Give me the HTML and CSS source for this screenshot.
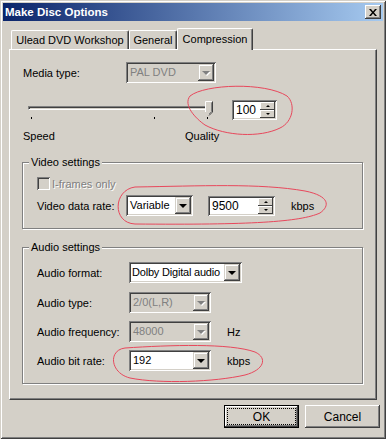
FILE: index.html
```html
<!DOCTYPE html>
<html lang="en">
<head>
    <meta charset="UTF-8">
    <meta name="viewport" content="width=device-width, initial-scale=1.0">
    <title>Make Disc Options</title>
    <link rel="stylesheet" href="styles.css">
</head>
<body>
    <div class="window">
        <div class="titlebar">
            <span class="title">Make Disc Options</span>
            <span class="close-btn">
                <svg width="8" height="7" viewBox="0 0 8 7"><path d="M0 0h2l2 2.4L6 0h2L5 3.5 8 7H6L4 4.6 2 7H0l3-3.5z" fill="#000"/></svg>
            </span>
        </div>

        <div class="tabs">
            <div class="tab tab-ulead">Ulead DVD Workshop</div>
            <div class="tab tab-general">General</div>
            <div class="tab tab-active">Compression</div>
        </div>

        <div class="panel">
            <div class="row">
                <span class="label label-media">Media type:</span>
                <div class="combo combo-media disabled">
                    <span class="combo-text">PAL DVD</span>
                    <span class="drop"><i class="arrow"></i></span>
                </div>
            </div>

            <div class="slider-row">
                <div class="slider">
                    <div class="track"></div>
                    <div class="ticks">
                        <span class="tick tick-min"></span>
                        <span class="tick tick-mid"></span>
                        <span class="tick tick-max"></span>
                    </div>
                    <svg class="thumb" width="8" height="15" viewBox="0 0 8 15">
                        <path d="M0.5 14V0.5H7.5V11L4 14.5z" fill="#d4d0c8"/>
                        <path d="M0.5 11V0.5H7" fill="none" stroke="#fff"/>
                        <path d="M7.5 0.5V11L4 14.5" fill="none" stroke="#404040"/>
                        <path d="M6.5 1.5V10.5L4 13" fill="none" stroke="#808080"/>
                    </svg>
                </div>
                <div class="spin spin-quality">
                    <span class="spin-text">100</span>
                    <span class="spin-btns">
                        <span class="spin-btn"><i class="mini-up"></i></span>
                        <span class="spin-btn"><i class="mini-down"></i></span>
                    </span>
                </div>
            </div>

            <div class="scale-labels">
                <span class="scale-speed">Speed</span>
                <span>Quality</span>
            </div>

            <div class="group group-video">
                <span class="group-label">Video settings</span>
                <div class="check-row">
                    <span class="checkbox"></span>
                    <span class="muted">I-frames only</span>
                </div>
                <div class="row row-rate">
                    <span class="label label-video">Video data rate:</span>
                    <div class="combo combo-rate">
                        <span class="combo-text">Variable</span>
                        <span class="drop"><i class="arrow"></i></span>
                    </div>
                    <div class="spin spin-rate">
                        <span class="spin-text">9500</span>
                        <span class="spin-btns">
                            <span class="spin-btn"><i class="mini-up"></i></span>
                            <span class="spin-btn"><i class="mini-down"></i></span>
                        </span>
                    </div>
                    <span class="unit unit-video">kbps</span>
                </div>
            </div>

            <div class="group group-audio">
                <span class="group-label">Audio settings</span>
                <div class="row">
                    <span class="label label-audio">Audio format:</span>
                    <div class="combo combo-format">
                        <span class="combo-text">Dolby Digital audio</span>
                        <span class="drop"><i class="arrow"></i></span>
                    </div>
                </div>
                <div class="row row-type">
                    <span class="label label-audio">Audio type:</span>
                    <div class="combo combo-small disabled">
                        <span class="combo-text">2/0(L,R)</span>
                        <span class="drop"><i class="arrow"></i></span>
                    </div>
                </div>
                <div class="row row-next">
                    <span class="label label-audio">Audio frequency:</span>
                    <div class="combo combo-small disabled">
                        <span class="combo-text">48000</span>
                        <span class="drop"><i class="arrow"></i></span>
                    </div>
                    <span class="unit">Hz</span>
                </div>
                <div class="row row-next">
                    <span class="label label-audio">Audio bit rate:</span>
                    <div class="combo combo-small">
                        <span class="combo-text">192</span>
                        <span class="drop"><i class="arrow"></i></span>
                    </div>
                    <span class="unit">kbps</span>
                </div>
            </div>
        </div>

        <div class="buttons">
            <button class="btn btn-default"><span class="focus">OK</span></button>
            <button class="btn">Cancel</button>
        </div>

        <!-- hand-drawn annotation marks -->
        <svg class="marks" width="386" height="439" viewBox="0 0 386 439">
            <path d="M190 96 C205 84 265 82 287 96 C296 104 293 122 280 128 C260 138 225 136 205 125 C195 118 183 105 190 96 Z"/>
            <path d="M135 187 C200 186 260 183 305 191 C330 196 330 206 320 213 C300 222 250 225 135 224 C112 223 113 190 135 187 Z"/>
            <path d="M125 348 C170 345 230 343 255 352 C268 358 264 370 245 375 C215 382 160 384 130 378 C110 373 108 350 125 348 Z"/>
        </svg>
    </div>
</body>
</html>
```

FILE: styles.css
```css
* {
    margin: 0;
    padding: 0;
    box-sizing: border-box;
}

body {
    background: #d4d0c8;
    font-family: 'Liberation Sans', Arial, sans-serif;
    font-size: 11px;
    color: #000;
}

.window {
    position: relative;
    width: 386px;
    height: 439px;
    padding: 3px;
    background: #d4d0c8;
    box-shadow: inset 1px 1px #d4d0c8, inset -1px -1px #404040,
                inset 2px 2px #fff, inset -2px -2px #808080;
}

/* Title bar */
.titlebar {
    height: 18px;
    display: flex;
    align-items: center;
    justify-content: space-between;
    padding: 0 2px 0 2px;
    background: linear-gradient(to right, #0a246a, #a6caf0);
    color: #fff;
    font-weight: bold;
    font-size: 11.5px;
}

.close-btn {
    width: 16px;
    height: 14px;
    display: flex;
    align-items: center;
    justify-content: center;
    background: #d4d0c8;
    box-shadow: inset -1px -1px #404040, inset 1px 1px #fff, inset -2px -2px #808080;
}

/* Tabs */
.tabs {
    display: flex;
    align-items: flex-end;
    height: 21px;
    margin-top: 7px;
    padding-left: 8px;
}

.tab {
    height: 19px;
    display: flex;
    align-items: center;
    justify-content: center;
    border-top: 1px solid #fff;
    border-left: 1px solid #fff;
    border-right: 1px solid #404040;
    border-radius: 2px 2px 0 0;
    box-shadow: inset -1px 0 #808080;
}

.tab-ulead { width: 118px; }
.tab-general { width: 48px; }

.tab-active {
    width: 76px;
    height: 22px;
    margin-bottom: -1px;
    padding-bottom: 2px;
    position: relative;
    z-index: 1;
    background: #d4d0c8;
}

/* Tab panel */
.panel {
    margin-left: 6px;
    width: 368px;
    height: 351px;
    padding: 12px 0 0 12px;
    border-top: 1px solid #fff;
    border-left: 1px solid #fff;
    border-right: 1px solid #404040;
    border-bottom: 1px solid #404040;
    box-shadow: inset -1px -1px #808080;
}

.row {
    display: flex;
    align-items: center;
    height: 21px;
}

.label { flex-shrink: 0; }
.label-media { width: 104px; padding-left: 1px; }
.label-video { width: 89px; }
.label-audio { width: 92px; }

/* Combo boxes */
.combo {
    display: flex;
    height: 21px;
    padding: 2px;
    background: #fff;
    box-shadow: inset 1px 1px #808080, inset -1px -1px #fff,
                inset 2px 2px #404040, inset -2px -2px #d4d0c8;
}

.combo.disabled {
    background: #d4d0c8;
    color: #808080;
}

.combo-text {
    flex: 1;
    padding-left: 2px;
    line-height: 17px;
    white-space: nowrap;
    overflow: hidden;
}

.combo-media { width: 90px; }
.combo-rate { width: 67px; }
.combo-format { width: 113px; }
.combo-format .combo-text { padding-left: 1px; letter-spacing: -0.2px; }
.combo-small { width: 82px; }

.drop {
    width: 16px;
    height: 17px;
    display: flex;
    align-items: center;
    justify-content: center;
    background: #d4d0c8;
    box-shadow: inset -1px -1px #404040, inset 1px 1px #d4d0c8,
                inset -2px -2px #808080, inset 2px 2px #fff;
}

.arrow {
    width: 0;
    height: 0;
    border-left: 4px solid transparent;
    border-right: 4px solid transparent;
    border-top: 4px solid #000;
    margin-top: 1px;
}

.disabled .arrow {
    border-top-color: #808080;
    filter: drop-shadow(1px 1px 0 #fff);
}

/* Spin boxes */
.spin {
    display: flex;
    height: 20px;
    padding: 2px;
    background: #fff;
    box-shadow: inset 1px 1px #808080, inset -1px -1px #fff,
                inset 2px 2px #404040, inset -2px -2px #d4d0c8;
}

.spin-text {
    flex: 1;
    padding-left: 2px;
    line-height: 16px;
    font-size: 12px;
}

.spin-btns {
    width: 15px;
    display: flex;
    flex-direction: column;
}

.spin-btn {
    flex: 1;
    display: flex;
    align-items: center;
    justify-content: center;
    background: #d4d0c8;
    box-shadow: inset -1px -1px #404040, inset 1px 1px #fff;
}

.mini-up, .mini-down {
    width: 0;
    height: 0;
    border-left: 2px solid transparent;
    border-right: 2px solid transparent;
}

.mini-up { border-bottom: 2px solid #000; }
.mini-down { border-top: 2px solid #000; }

.spin-quality { width: 45px; margin-left: 17px; }
.spin-rate { width: 67px; margin-left: 15px; }

/* Slider */
.slider-row {
    display: flex;
    margin-top: 17px;
}

.slider {
    position: relative;
    width: 193px;
}

.track {
    width: 182px;
    height: 4px;
    margin: 6px 0 0 6px;
    border-top: 1px solid #808080;
    border-left: 1px solid #808080;
    border-bottom: 1px solid #fff;
    border-right: 1px solid #fff;
    background: #d4d0c8;
    box-shadow: inset 1px 1px #404040;
}

.ticks {
    display: flex;
    margin-top: 7px;
}

.tick {
    width: 1px;
    height: 2px;
    background: #000;
}

.tick-min { margin-left: 9px; }
.tick-mid { margin-left: 122px; }
.tick-max { margin-left: 52px; }

.thumb {
    position: absolute;
    left: 183px;
    top: 1px;
}

.scale-labels {
    display: flex;
    margin-top: 10px;
    line-height: 13px;
}

.scale-speed {
    width: 163px;
    padding-left: 1px;
}

/* Group boxes */
.group {
    position: relative;
    width: 341px;
    border: 1px solid #808080;
    box-shadow: inset 1px 1px #fff, 1px 1px #fff;
    padding: 14px 0 0 14px;
}

.group-video {
    height: 67px;
    margin-top: 19px;
}

.group-audio {
    height: 137px;
    margin-top: 18px;
}

.group-label {
    position: absolute;
    top: -7px;
    left: 6px;
    padding: 0 2px;
    line-height: 13px;
    background: #d4d0c8;
}

.check-row {
    display: flex;
    align-items: center;
    gap: 2px;
    height: 13px;
}

.checkbox {
    width: 13px;
    height: 13px;
    background: #d4d0c8;
    box-shadow: inset 1px 1px #808080, inset -1px -1px #fff,
                inset 2px 2px #404040, inset -2px -2px #d4d0c8;
}

.muted {
    color: #808080;
    text-shadow: 1px 1px 0 #fff;
}

.row-rate { margin-top: 5px; }
.row-type { margin-top: 9px; }
.row-next { margin-top: 8px; }

.unit { margin-left: 16px; }
.unit-video { margin-left: 16px; }

/* Buttons */
.buttons {
    display: flex;
    justify-content: flex-end;
    gap: 6px;
    margin-top: 5px;
    padding-right: 3px;
}

.btn {
    width: 75px;
    height: 23px;
    border: none;
    background: #d4d0c8;
    font-family: inherit;
    font-size: 12px;
    color: #000;
    box-shadow: inset -1px -1px #404040, inset 1px 1px #fff,
                inset -2px -2px #808080, inset 2px 2px #d4d0c8;
}

.btn-default {
    border: 1px solid #000;
    padding: 3px;
}

.focus {
    display: flex;
    align-items: center;
    justify-content: center;
    height: 100%;
    outline: 1px dotted #000;
}

/* Annotation overlay */
.marks {
    position: absolute;
    top: 0;
    left: 0;
    pointer-events: none;
}

.marks path {
    fill: none;
    stroke: #e8485c;
    stroke-width: 1;
}
```
